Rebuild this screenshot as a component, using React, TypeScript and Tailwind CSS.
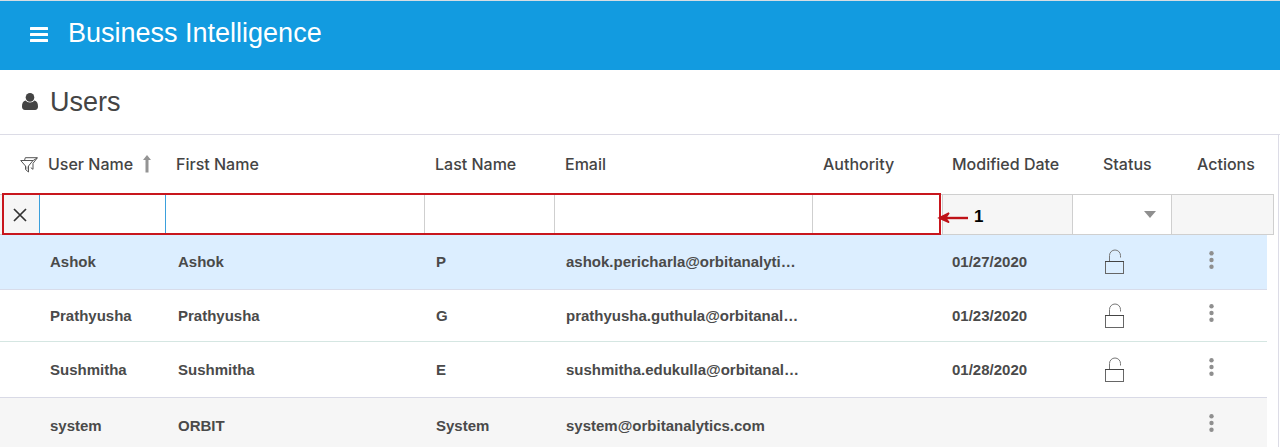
import React from "react";

type User = {
  userName: string;
  firstName: string;
  lastName: string;
  email: string;
  modified: string;
  row: string;
};

const users: User[] = [
  { userName: "Ashok", firstName: "Ashok", lastName: "P", email: "ashok.pericharla@orbitanalyti…", modified: "01/27/2020", row: "h-[55px] [&>.cell]:bg-[#dceeff] [&>.cell]:border-[#d8dcea]" },
  { userName: "Prathyusha", firstName: "Prathyusha", lastName: "G", email: "prathyusha.guthula@orbitanal…", modified: "01/23/2020", row: "h-[52px] [&>.cell]:border-[#d5e6e2]" },
  { userName: "Sushmitha", firstName: "Sushmitha", lastName: "E", email: "sushmitha.edukulla@orbitanal…", modified: "01/28/2020", row: "h-14 [&>.cell]:border-[#d9dae6]" },
  { userName: "system", firstName: "ORBIT", lastName: "System", email: "system@orbitanalytics.com", modified: "", row: "h-14 [&>.cell]:bg-[#f6f6f6] [&>.cell]:border-[#d9dae6]" },
];

function MenuIcon() {
  return (
    <svg width="18" height="15" viewBox="0 0 18 15" fill="#fff" aria-hidden="true">
      <rect y="0" width="18" height="3" rx="0.5" />
      <rect y="6" width="18" height="3" rx="0.5" />
      <rect y="12" width="18" height="3" rx="0.5" />
    </svg>
  );
}

function UserIcon() {
  return (
    <svg width="16" height="18" viewBox="0 0 16 18" fill="#444" aria-hidden="true">
      <circle cx="8" cy="4.400" r="4.300" />
      <path d="M3.600 7.600C1 8.100 0 10.300 0 13.500 0 15.700 1.100 17 3 17h10c1.900 0 3-1.300 3-3.500 0-3.200-1-5.400-3.600-5.900C11.400 8.800 10 9.600 8 9.600S4.600 8.800 3.600 7.600z" />
    </svg>
  );
}

function FilterIcon() {
  return (
    <svg width="18" height="16" viewBox="0 0 18 16" fill="none" stroke="#555" strokeWidth="1" aria-hidden="true">
      <path d="M0.700 3.500h12.300L8.500 9v6L5.500 12.500V9z" />
      <path d="M4.500 3.500L5.300 0.700H17.500L13 6.300v6l-2.200-1.600" />
      <path d="M13.200 3.500L17 1" />
      <path d="M7 9.500v3" strokeWidth="0.700" />
    </svg>
  );
}

function SortIcon() {
  return (
    <svg width="8" height="18" viewBox="0 0 8 18" fill="#949494" aria-hidden="true">
      <path d="M4 0L8 5H5.500V17.500H2.500V5H0z" />
    </svg>
  );
}

function UnlockIcon() {
  return (
    <svg width="20" height="26" viewBox="0 0 20 26" fill="none" stroke="#666" strokeWidth="1" aria-hidden="true">
      <path d="M4.500 12.500V6.500a5.500 5.500 0 0 1 11 0V8.500" stroke="#777" />
      <rect x="0.500" y="12.500" width="18" height="12" />
      <path d="M0 12.500H19" stroke="#444" />
    </svg>
  );
}

function DotsIcon() {
  return (
    <svg width="5" height="18" viewBox="0 0 5 18" fill="#8f8f8f" aria-hidden="true">
      <circle cx="2.500" cy="2.300" r="2.200" />
      <circle cx="2.500" cy="9" r="2.200" />
      <circle cx="2.500" cy="15.700" r="2.200" />
    </svg>
  );
}

function FilterInput({ label, focused = false }: { label: string; focused?: boolean }) {
  return (
    <td className={`h-[41px] border-y border-r p-0 ${focused ? "border-l border-[#3ba0dc]" : "border-[#cfcfcf]"}`}>
      <input type="text" aria-label={label} className="block h-[39px] w-full bg-white px-2 text-base outline-none" />
    </td>
  );
}

export default function App() {
  return (
    <div className="flex h-screen flex-col overflow-hidden bg-white font-['Liberation_Sans',Arial,sans-serif] text-[#444]">
      <header className="flex h-[70px] shrink-0 items-center gap-5 border-t border-[#d5dde3] bg-[#129be0] pb-[6px] pl-[30px]">
        <button type="button" aria-label="Menu" className="pt-1"><MenuIcon /></button>
        <span className="text-[27px] leading-8 text-white">Business Intelligence</span>
      </header>
      <div className="flex h-[65px] shrink-0 items-center gap-3 border-b border-[#dcdce6] pb-px pl-[22px]">
        <UserIcon />
        <h1 className="text-[27px] leading-8">Users</h1>
      </div>
      <main className="relative mr-px grow border-r border-[#dcdce6] pr-1">
        <div className="relative">
          <table className="w-full table-fixed border-separate border-spacing-0 text-left">
            <colgroup>
              <col className="w-[39px]" />
              <col className="w-[127px]" />
              <col className="w-[259px]" />
              <col className="w-[130px]" />
              <col className="w-[258px]" />
              <col className="w-[130px]" />
              <col className="w-[130px]" />
              <col className="w-[99px]" />
              <col className="w-[95px]" />
              <col className="w-[7px]" />
            </colgroup>
            <thead className="font-['Inter','Liberation_Sans',sans-serif] text-base leading-5">
              <tr className="h-[59px] [&>th]:p-0 [&>th]:pb-[2px] [&>th]:font-medium [&>th]:whitespace-nowrap">
                <th><button type="button" aria-label="Filter" className="block pt-[2px] pl-5"><FilterIcon /></button></th>
                <th><button type="button" className="flex items-center gap-[10px] pl-[9px] font-medium">User Name<SortIcon /></button></th>
                <th><span className="pl-[10px]">First Name</span></th>
                <th><span className="pl-[10px]">Last Name</span></th>
                <th><span className="pl-[10px]">Email</span></th>
                <th><span className="pl-[10px]">Authority</span></th>
                <th><span className="pl-[9px]">Modified Date</span></th>
                <th><span className="pl-[30px]">Status</span></th>
                <th><span className="pl-[25px]">Actions</span></th>
                <td />
              </tr>
            </thead>
            <tbody className="text-[15px] leading-5 font-bold text-[#4a4a4a]">
              <tr>
                <td className="border-y border-[#cfcfcf] bg-[#f6f6f6] p-0">
                  <button type="button" aria-label="Clear filters" className="block pl-[13px]">
                    <svg width="14" height="14" viewBox="0 0 14 14" stroke="#333" strokeWidth="1.700" aria-hidden="true">
                      <path d="M1 1l12 12M13 1L1 13" />
                    </svg>
                  </button>
                </td>
                <FilterInput label="User Name" focused />
                <FilterInput label="First Name" />
                <FilterInput label="Last Name" />
                <FilterInput label="Email" />
                <FilterInput label="Authority" />
                <td className="relative border-y border-r border-[#cfcfcf] bg-[#f6f6f6] p-0">
                  <div className="absolute top-3 -left-[6px] z-10 flex items-center gap-[6px] text-black">
                    <svg width="31" height="12" viewBox="0 0 31 12" fill="none" stroke="#bf1218" strokeWidth="2.400" aria-hidden="true">
                      <path d="M3 7H31" />
                      <path d="M12 2L2 7l10 4.500L8.500 7z" fill="#bf1218" strokeWidth="1.500" />
                    </svg>
                    <span className="text-[17px] leading-5">1</span>
                  </div>
                </td>
                <td className="relative border-y border-r border-[#cfcfcf] p-0">
                  <select aria-label="Status" className="block h-[39px] w-full appearance-none bg-white px-2 font-normal outline-none">
                    <option value=""></option>
                    <option>Locked</option>
                    <option>Unlocked</option>
                  </select>
                  <svg className="pointer-events-none absolute top-4 right-[15px]" width="12" height="7" viewBox="0 0 12 7" fill="#8f8f8f" aria-hidden="true">
                    <path d="M0 0h12L6 7z" />
                  </svg>
                </td>
                <td colSpan={2} className="border-y border-r border-[#cfcfcf] bg-[#f6f6f6] p-0" />
              </tr>
              {users.map((u) => (
                <tr key={u.userName} className={`${u.row} [&>td]:p-0 [&>.cell]:border-b [&>td]:whitespace-nowrap`}>
                  <td className="cell" />
                  <td className="cell"><span className="pl-[11px]">{u.userName}</span></td>
                  <td className="cell"><span className="pl-3">{u.firstName}</span></td>
                  <td className="cell"><span className="pl-[11px]">{u.lastName}</span></td>
                  <td className="cell"><span className="pl-[11px]">{u.email}</span></td>
                  <td className="cell" />
                  <td className="cell"><span className="pl-[9px]">{u.modified}</span></td>
                  <td className="cell"><div className="pl-8">{u.modified && <UnlockIcon />}</div></td>
                  <td className="cell"><button type="button" aria-label={`Actions for ${u.userName}`} className="block pb-[5px] pl-[37px]"><DotsIcon /></button></td>
                  <td />
                </tr>
              ))}
            </tbody>
          </table>
          <div className="pointer-events-none absolute top-[58px] left-[2px] h-[42px] w-[73.7%] border-2 border-[#c8161d]" />
        </div>
      </main>
    </div>
  );
}
